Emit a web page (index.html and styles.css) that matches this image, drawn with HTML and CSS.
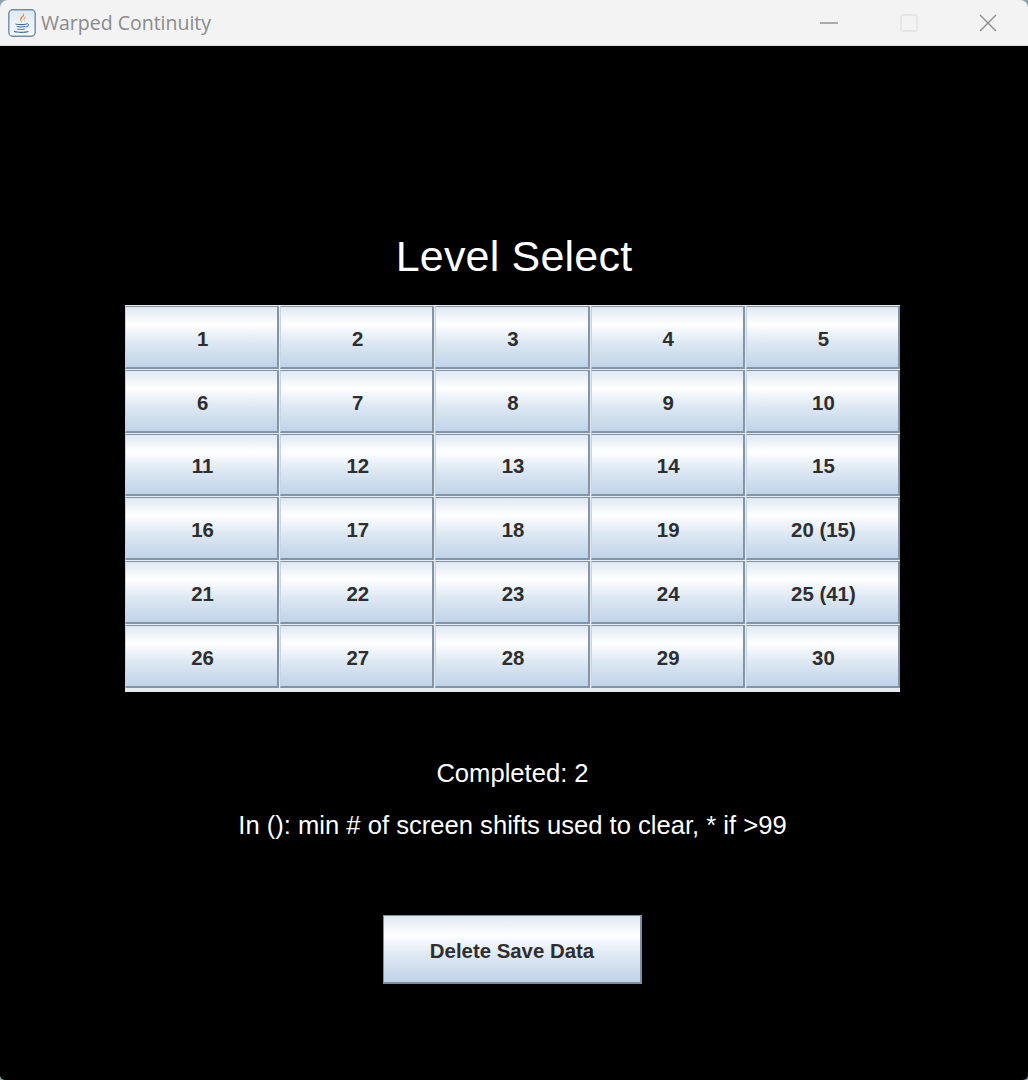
FILE: index.html
```html
<!DOCTYPE html>
<html lang="en">
<head>
    <meta charset="UTF-8">
    <title>Warped Continuity</title>
    <link rel="stylesheet" href="styles.css">
</head>
<body>
    <div class="window">
        <div class="titlebar">
            <svg class="app-icon" width="28" height="28" viewBox="0 0 28 28">
                <defs>
                    <linearGradient id="tile" x1="0" y1="0" x2="0" y2="1">
                        <stop offset="0" stop-color="#dfe9f2"/>
                        <stop offset="1" stop-color="#f6f9fb"/>
                    </linearGradient>
                </defs>
                <rect x=".8" y=".8" width="26.400" height="26.400" rx="4" fill="url(#tile)" stroke="#6f8ca8" stroke-width="1.400"/>
                <path d="M15.500 3.500c1.200 3-4.500 4.500-3.200 7.800.4 1 1.200 1.800 1.700 2.700-.1-1.700-1.300-2.800-.6-4.100.9-1.800 4.200-3 2.100-6.400z" fill="#e8801e"/>
                <path d="M18 7.500c-1.800 1-3 2.200-2.200 3.800.2.500.5 1 .7 1.500.1-1.100-.7-1.800-.2-2.700.4-.8 1.300-1.400 1.700-2.600z" fill="#e8801e"/>
                <path d="M7.500 14.500c2.200.8 8.800.8 11 0v1.100c-2.200.8-8.800.8-11 0z" fill="#35699b"/>
                <path d="M8.800 17c2.200.6 6.200.6 8.400 0v1c-2.200.6-6.200.6-8.400 0z" fill="#35699b"/>
                <path d="M18.500 14.800c2.800-.5 3 2.500-1 3.400" fill="none" stroke="#35699b" stroke-width="1"/>
                <path d="M9.300 19.500c2 .5 5.400.5 7.400 0v.9c-2 .5-5.400.5-7.400 0z" fill="#35699b"/>
                <path d="M6 22c3.700 1 10.800 1 14.500 0v1c-3.700 1.200-10.800 1.200-14.500 0z" fill="#35699b"/>
            </svg>
            <span class="app-title">Warped Continuity</span>
            <div class="controls">
                <svg class="control" width="18" height="18" viewBox="0 0 18 18"><path d="M0 9h18" stroke="#8c8c8c" stroke-width="1.400"/></svg>
                <svg class="control" width="18" height="18" viewBox="0 0 18 18"><rect x="1" y="1" width="16" height="16" rx="2" fill="none" stroke="#e2e2e2" stroke-width="1.400"/></svg>
                <svg class="control" width="18" height="18" viewBox="0 0 18 18"><path d="M1 1l16 16M17 1L1 17" stroke="#8c8c8c" stroke-width="1.400"/></svg>
            </div>
        </div>

        <div class="content">
            <div class="heading">Level Select</div>

            <div class="levels">
                <button class="btn">1</button>
                <button class="btn">2</button>
                <button class="btn">3</button>
                <button class="btn">4</button>
                <button class="btn">5</button>
                <button class="btn">6</button>
                <button class="btn">7</button>
                <button class="btn">8</button>
                <button class="btn">9</button>
                <button class="btn">10</button>
                <button class="btn">11</button>
                <button class="btn">12</button>
                <button class="btn">13</button>
                <button class="btn">14</button>
                <button class="btn">15</button>
                <button class="btn">16</button>
                <button class="btn">17</button>
                <button class="btn">18</button>
                <button class="btn">19</button>
                <button class="btn">20 (15)</button>
                <button class="btn">21</button>
                <button class="btn">22</button>
                <button class="btn">23</button>
                <button class="btn">24</button>
                <button class="btn">25 (41)</button>
                <button class="btn">26</button>
                <button class="btn">27</button>
                <button class="btn">28</button>
                <button class="btn">29</button>
                <button class="btn">30</button>
            </div>

            <div class="completed">Completed: 2</div>
            <div class="hint">In (): min # of screen shifts used to clear, * if &gt;99</div>

            <button class="btn delete">Delete Save Data</button>
        </div>
    </div>
</body>
</html>
```

FILE: styles.css
```css
html, body {
    margin: 0;
    padding: 0;
    height: 1080px;
    overflow: hidden;
    background-color: #8ea3a6;
}
.window {
    width: 1028px;
    height: 1080px;
    display: flex;
    flex-direction: column;
    border-radius: 8px 8px 5px 5px;
    overflow: hidden;
}
.titlebar {
    height: 45px;
    flex: none;
    display: flex;
    align-items: center;
    padding-left: 8px;
    background-color: #f3f3f3;
    border-bottom: 1px solid #dcdcdc;
}
.app-icon {
    flex: none;
}
.app-title {
    margin-left: 5px;
    font-family: "Open Sans", sans-serif;
    font-size: 19.500px;
    color: #8a8a8a;
}
.controls {
    margin-left: auto;
    margin-right: 31px;
    display: flex;
    gap: 61.500px;
}
.content {
    flex: 1;
    background-color: #000;
    display: flex;
    flex-direction: column;
    align-items: center;
    font-family: "Liberation Sans", Arial, sans-serif;
    color: #fff;
}
.heading {
    margin-top: 186px;
    height: 49px;
    line-height: 49px;
    font-size: 43px;
    letter-spacing: .2px;
}
.levels {
    margin-top: 24px;
    margin-left: -3px;
    width: 775px;
    box-sizing: border-box;
    display: grid;
    grid-template-columns: repeat(5, 1fr);
    grid-auto-rows: 62.800px;
    gap: 1px;
    padding-top: 1px;
    padding-bottom: 4px;
    background-color: #e6ebf0;
}
.btn {
    margin: 0;
    padding: 5px 0 0 2px;
    border: 2px solid #8494a8;
    border-top-width: 1px;
    border-left-width: 1px;
    border-left-color: #c6d3e0;
    font-family: "Liberation Sans", Arial, sans-serif;
    font-weight: bold;
    font-size: 20.400px;
    color: #2e2e2e;
    background: linear-gradient(to bottom, #dfe8f2 0%, #ffffff 29%, #f6f9fc 36%, #dde8f3 60%, #c0d3e8 100%);
}
.completed {
    margin-top: 67px;
    margin-left: -3px;
    height: 28px;
    line-height: 28px;
    font-size: 25.600px;
}
.hint {
    margin-top: 24px;
    margin-left: -3px;
    height: 28px;
    line-height: 28px;
    font-size: 25.600px;
}
.delete {
    margin-top: 76px;
    margin-left: -3px;
    width: 259px;
    height: 69px;
    border: 2px solid #7f8ea3;
    border-top-width: 1px;
    border-left-width: 1px;
    padding: 6px 0 0 0;
}
```
